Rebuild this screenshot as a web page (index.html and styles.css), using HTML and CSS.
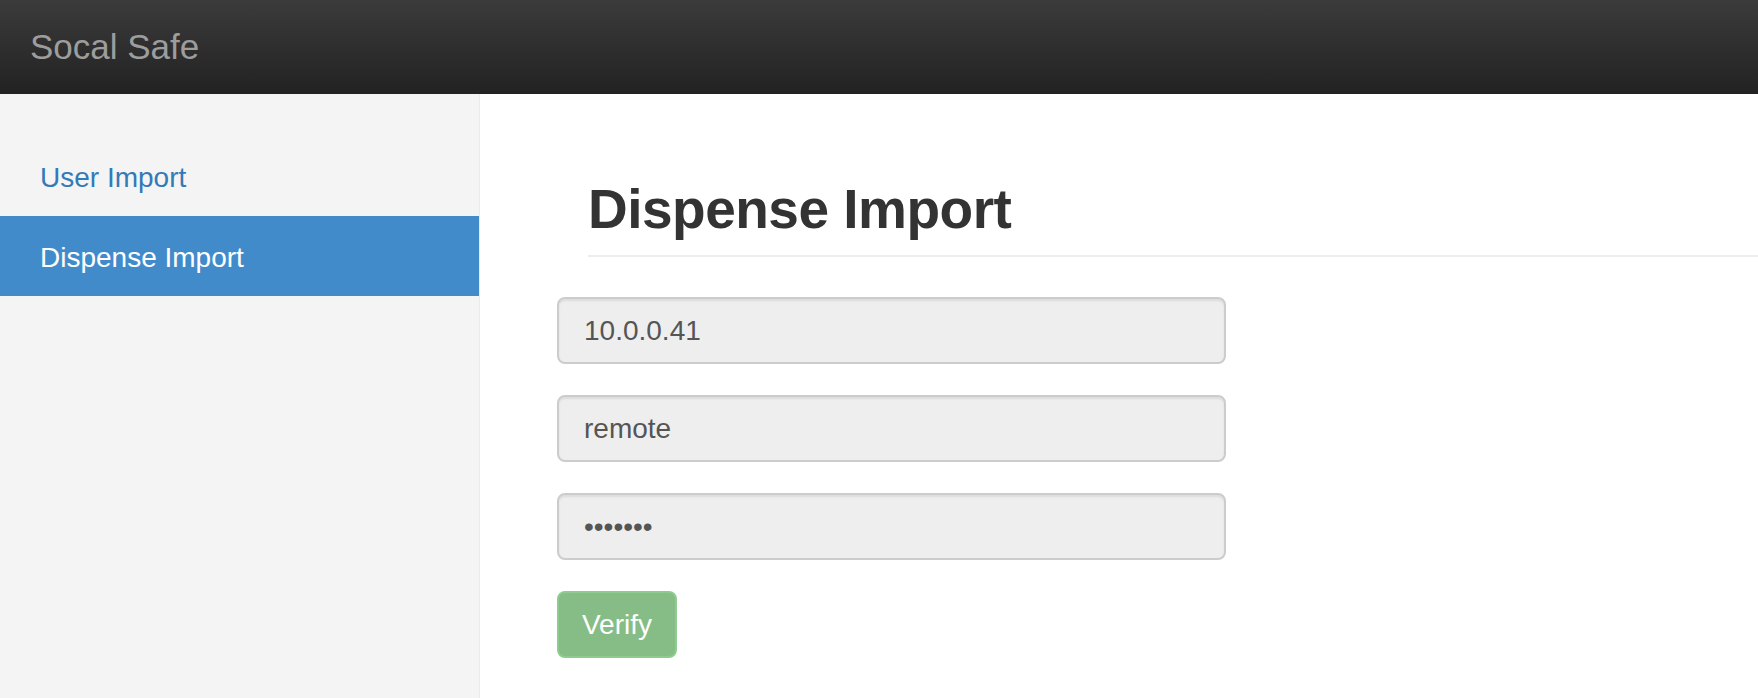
FILE: index.html
```html
<!DOCTYPE html>
<html lang="en">
<head>
<meta charset="utf-8">
<title>Socal Safe - Dispense Import</title>
<link rel="stylesheet" href="styles.css">
</head>
<body>
<header class="navbar">
  <a class="brand" href="#">Socal Safe</a>
</header>
<div class="layout">
  <nav class="sidebar">
    <ul class="nav-list">
      <li><a class="nav-link" href="#">User Import</a></li>
      <li><a class="nav-link active" href="#">Dispense Import</a></li>
    </ul>
  </nav>
  <main class="main">
    <div class="page-header">
      <h1 class="title">Dispense Import</h1>
    </div>
    <form class="form">
      <div class="form-group"><input class="form-control" type="text" value="10.0.0.41" readonly></div>
      <div class="form-group"><input class="form-control" type="text" value="remote" readonly></div>
      <div class="form-group"><input class="form-control" type="text" value="•••••••" readonly></div>
      <button class="btn-verify" type="button">Verify</button>
    </form>
  </main>
</div>
</body>
</html>
```
FILE: styles.css
```css
* { box-sizing: border-box; }
html, body { margin: 0; padding: 0; height: 100%; }
body {
  font-family: "Liberation Sans", Arial, Helvetica, sans-serif;
  background: #fff;
  color: #333;
  display: flex;
  flex-direction: column;
  overflow: hidden;
}
.navbar {
  height: 94px;
  flex: 0 0 94px;
  background: linear-gradient(to bottom, #3b3b3b 0%, #222 100%);
  display: flex;
  align-items: center;
  padding: 0 0 2px 30px;
}
.brand {
  color: #9d9d9d;
  font-size: 35px;
  line-height: 1;
  text-decoration: none;
}
.layout {
  flex: 1;
  display: flex;
}
.sidebar {
  width: 480px;
  flex: 0 0 480px;
  background: #f4f4f4;
  border-right: 1px solid #eaeaea;
  padding-top: 42px;
}
.nav-list {
  list-style: none;
  margin: 0;
  padding: 0;
}
.nav-link {
  display: block;
  height: 80px;
  line-height: 80px;
  padding: 2px 40px 0;
  font-size: 28px;
  color: #337ab7;
  text-decoration: none;
}
.nav-link.active {
  background: #428bca;
  color: #fff;
}
.main {
  flex: 1;
  padding: 84px 0 0 77px;
  min-width: 0;
}
.page-header {
  margin: 0 0 40px 31px;
  padding-top: 1px;
  padding-bottom: 16px;
  border-bottom: 2px solid #eee;
}
.title {
  margin: 0;
  font-size: 55px;
  line-height: 60px;
  font-weight: 700;
  letter-spacing: -0.5px;
  color: #333;
}
.form-group {
  margin-bottom: 31px;
}
.form-control {
  display: block;
  width: 669px;
  height: 67px;
  padding: 0 25px;
  font-family: "Liberation Sans", Arial, Helvetica, sans-serif;
  font-size: 28px;
  color: #555;
  background: #eee;
  border: 2px solid #ccc;
  border-radius: 8px;
  box-shadow: inset 0 2px 2px rgba(0,0,0,.075);
  outline: none;
}
.btn-verify {
  display: block;
  width: 120px;
  height: 67px;
  padding: 0;
  font-family: "Liberation Sans", Arial, Helvetica, sans-serif;
  font-size: 28px;
  color: #fff;
  background: #86bd86;
  border: 2px solid #8ecb8e;
  border-radius: 8px;
  cursor: default;
}
```
